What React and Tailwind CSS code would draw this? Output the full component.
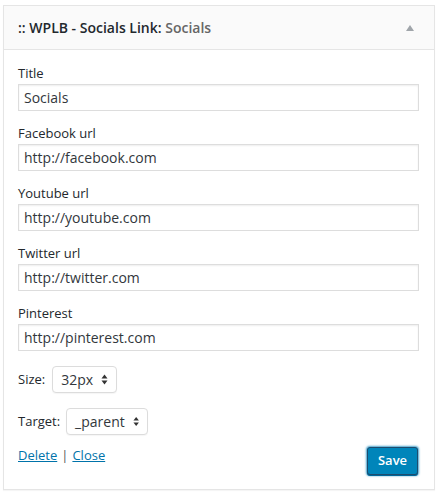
const fields = [
  { label: "Title", value: "Socials" },
  { label: "Facebook url", value: "http://facebook.com" },
  { label: "Youtube url", value: "http://youtube.com" },
  { label: "Twitter url", value: "http://twitter.com" },
  { label: "Pinterest", value: "http://pinterest.com" },
];

function Arrows() {
  return (
    <svg width="7" height="11" viewBox="0 0 7 11" className="ml-2">
      <path d="M3.5 0.5 L6.5 4.5 H0.5 Z" fill="#333" />
      <path d="M3.5 10.5 L6.5 6.5 H0.5 Z" fill="#333" />
    </svg>
  );
}

function FakeSelect({ value, width }) {
  return (
    <div
      className={`flex items-center justify-between h-[27px] ${width} rounded-[4px] border border-[#dcdcdc] bg-white pl-[8px] pr-[8px] text-[14px] text-[#32373c] shadow-[0_1px_1px_rgba(0,0,0,0.04)]`}
    >
      <span>{value}</span>
      <Arrows />
    </div>
  );
}

export default function App() {
  return (
    <div className="w-[439px] h-[493px] bg-white pt-[5px] px-[3px] font-['Open_Sans',sans-serif]">
      <div className="w-[432px] border border-[#e5e5e5] bg-white shadow-[0_1px_1px_rgba(0,0,0,0.04)]">
        <div className="h-[44px] flex items-center justify-between bg-[#fafafa] border-b border-[#e5e5e5] pl-[14px] pr-[20px]">
          <div className="text-[14px] font-semibold text-[#23282d]">
            :: WPLB - Socials Link: <span className="text-[#666]">Socials</span>
          </div>
          <svg width="8" height="6" viewBox="0 0 8 6">
            <path d="M4 0 L8 6 H0 Z" fill="#a0a5aa" />
          </svg>
        </div>

        <div className="pt-[14px] pl-[14px] pr-[15px] pb-[14px]">
          {fields.map((f) => (
            <div key={f.label} className="mb-[13px]">
              <div className="h-[18px] leading-[18px] text-[13px] text-[#23282d]">
                {f.label}
              </div>
              <div className="mt-[2px] h-[27px] w-[401px] border border-[#ddd] bg-white flex items-center pl-[5px] text-[14px] text-[#32373c] shadow-[inset_0_1px_2px_rgba(0,0,0,0.07)]">
                {f.value}
              </div>
            </div>
          ))}

          <div className="mt-[15px] flex items-center gap-[7px] text-[13px] text-[#23282d]">
            <span>Size:</span>
            <FakeSelect value="32px" width="w-[65px]" />
          </div>

          <div className="mt-[15px] flex items-center gap-[6px] text-[13px] text-[#23282d]">
            <span>Target:</span>
            <FakeSelect value="_parent" width="w-[82px]" />
          </div>

          <div className="mt-[12px] flex items-start justify-between">
            <div className="-mt-[1px] text-[13px] text-[#555]">
              <a className="text-[#0073aa] underline">Delete</a>
              <span className="mx-[4px]">|</span>
              <a className="text-[#0073aa] underline">Close</a>
            </div>
            <button className="mr-[1px] h-[28px] w-[51px] rounded-[3px] border border-[#1e4c6e] bg-[#0085ba] text-[13px] font-semibold text-white shadow-[0_1px_0_#006799,0_0_2px_1px_rgba(30,140,190,0.8)]">
              Save
            </button>
          </div>
        </div>
      </div>
    </div>
  );
}
